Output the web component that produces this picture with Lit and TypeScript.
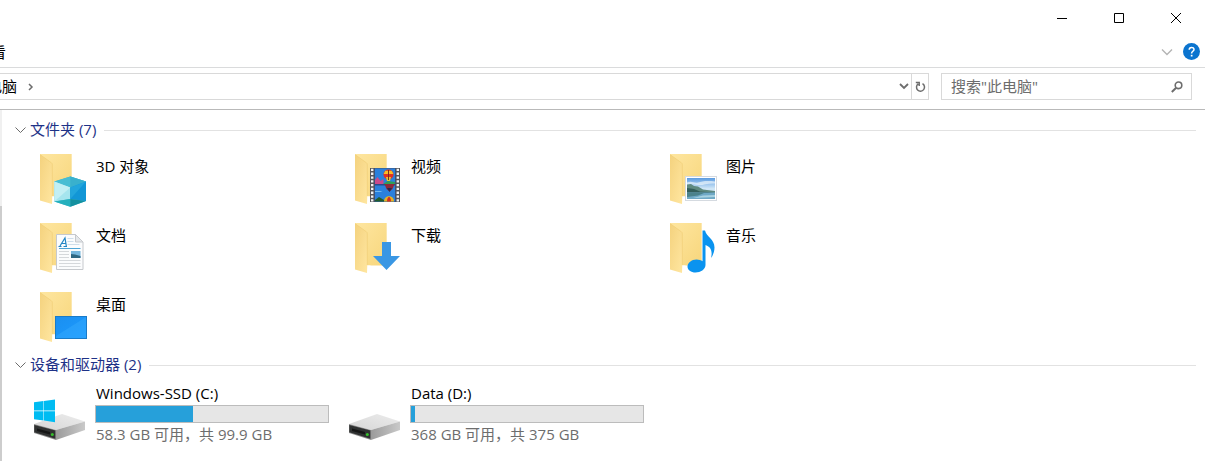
import { LitElement, html, css, svg, nothing, SVGTemplateResult } from "lit";
import { customElement, property, state } from "lit/decorators.js";

const overlays: Record<string, SVGTemplateResult> = {
  objects: svg`
    <polygon points="42.3,27.5 58,32.5 58,52 42.3,57.8 26.3,52.5 26.3,32.5" fill="#3fb6cf"/>
    <polygon points="42.3,27.5 58,32.5 42.3,38.5 26.3,32.5" fill="#48bdd3"/>
    <polygon points="42.3,27.5 58,32.5 42.3,38.5" fill="#39b0cd"/>
    <polygon points="26.3,32.5 42.3,38.5 42.3,50 26.3,52.5" fill="#a5e5ee"/>
    <polygon points="26.3,32.5 42.3,38.5 26.3,52.5" fill="#c2eff4"/>
    <polygon points="26.3,52.5 42.3,50 42.3,57.8" fill="#25b0bd"/>
    <polygon points="42.3,38.5 58,32.5 58,52 42.3,50" fill="#1296d6"/>
    <polygon points="42.3,38.5 58,32.5 42.3,50" fill="#22a5dc"/>
    <polygon points="42.3,50 58,52 42.3,57.8" fill="#14909f"/>`,
  video: svg`<g transform="translate(-3 0)">
    <rect x="30" y="19" width="30" height="34" fill="#55565a"/>
    <rect x="34.500" y="19.500" width="21" height="33" fill="#2a4a8a"/>
    <rect x="35" y="19.500" width="20" height="15.500" fill="#2a80dc"/>
    <rect x="35" y="36.500" width="20" height="16" fill="#2a80dc"/>
    <path d="M32.200 19.800V53M57.800 19.800V53" stroke="#f2f2f3" stroke-width="2.400" stroke-dasharray="2.300 1.500"/>
    <path d="M35 31l2.500-3 3 4 3-2v5H35z" fill="#c84b8b"/>
    <path d="M43 35l5-3 7 1v2z" fill="#2f9c58"/>
    <circle cx="48.500" cy="25.500" r="5" fill="#e33022"/>
    <path d="M45.300 21.800h6.400l1.700 3.200h-9.800z" fill="#f8bd26"/>
    <path d="M46 28h5l-1 4h-3z" fill="#e7c333"/>
    <path d="M48.500 21v10" stroke="#7a2d25"/>
    <path d="M44.500 35h10l-2 5-3 2.500-3-2.500z" fill="#8f293a"/>
    <path d="M47 39h5l-2.500 4z" fill="#272a50"/>
    <path d="M35 42h5.500l2 1H35z" fill="#72b9ef"/>
    <path d="M35 51l4-3 5 3v1.500h-9z" fill="#235b2d"/>
    <path d="M44 52.500c0-7 10-7 10 0z" fill="#e6b224"/>
    <path d="M47 52.500c0-6 4-6 4 0z" fill="#d22e24"/></g>`,
  pictures: svg`<g transform="translate(-3 0)">
    <rect x="30.500" y="27.500" width="31" height="24" fill="#fff" stroke="#d5dae0"/>
    <rect x="32" y="29" width="28" height="21" fill="url(#sky)"/>
    <path d="M32 33.500c5-2 7 1 11 0s8-2 17-1v2c-8-.5-12 2-17 1.500s-7-1-11 0z" fill="#eaf4fb" opacity=".7"/>
    <path d="M32 35.500l4-.5 3 2 4 .5 5 3 12 1.500v1.500H32z" fill="#5f8a80"/>
    <path d="M32 39l7 1 6 2.500 15 1V44H32z" fill="#335e5a"/>
    <rect x="32" y="43.500" width="28" height="6.500" fill="#6fa9c6"/>
    <path d="M32 44h17l-6 2.500-11 1.500z" fill="#4b828b"/>
    <path d="M38 49l10-2.500 12-.5v2z" fill="#a8d2e2"/></g>`,
  documents: svg`
    <path d="M28.500 16.500h19l7.500 7.500v27.500h-26.500z" fill="#fbfcfd" stroke="#c6c9cd"/>
    <path d="M47.500 16.500v7.500h7.500z" fill="#e5e8eb" stroke="#c6c9cd"/>
    <path d="M39.500 20.500h6M39.500 23.500h6M39.500 26.500h12" stroke="#cfdeea"/>
    <path d="M31 30.500h21.500" stroke="#4fa5d5"/>
    <path d="M31 33.500h10M31 36.500h10M31 39.500h10M31 42.500h21.500M31 45.500h21.500M31 48.500h21.500" stroke="#d5d8db"/>
    <rect x="43" y="33" width="9.500" height="7" fill="#75b6dd"/>
    <path d="M43 36l4 .5 5.500 1.500v2H43z" fill="#2e6783"/>
    <path d="M30.500 28.500h3M35.500 28.500h3.500M32 28l5-8 1.300 8M33.500 25.500h4" fill="none" stroke="#2486c4" stroke-width="1.200"/>`,
  downloads: svg`<path d="M39 24h9v14h9L43.500 52 30 38h9z" fill="#3a97e4"/>`,
  music: svg`
    <path transform="translate(-3 0)" d="M47.500 12.500h2.500c1.500 6.500 9.500 8.500 9.500 17 0 4-1.500 8-3.500 10.500 1.500-6 .5-11-5.500-13V47c0 4.500-5 7.500-10 7.500-4.500 0-8-2.500-8-6s4-7 9-7c2.500 0 4.500.7 6 1.800z" fill="#0a93ef"/>`,
  desktop: svg`
    <rect x="27.500" y="29.500" width="31" height="22" fill="url(#desk)" stroke="#1a7bc8"/>
    <path d="M28 49l19-12 11-7v21H28z" fill="#3fb1ff" opacity=".35"/>`,
};

@customElement("folder-icon")
class FolderIcon extends LitElement {
  @property() kind = "";
  static styles = css`
    :host { display: block; flex: none; }
    svg { display: block; }
  `;
  render() {
    return html`<svg width="60" height="60" viewBox="0 0 60 60" overflow="visible" aria-hidden="true">
      <defs>
        <linearGradient id="back" x1="0" y1="0" x2="1" y2="1"><stop offset="0" stop-color="#fee6a0"/><stop offset="1" stop-color="#f7d67c"/></linearGradient>
        <linearGradient id="flap" x1="0" y1="0" x2="1" y2="1"><stop offset="0" stop-color="#f4d27e"/><stop offset="1" stop-color="#ffe6a0"/></linearGradient>
        <linearGradient id="sky" x1="0" y1="0" x2="0" y2="1"><stop offset="0" stop-color="#5b9be0"/><stop offset=".5" stop-color="#cfe6f7"/></linearGradient>
        <linearGradient id="desk" x1="0" y1="0" x2="1" y2="1"><stop offset="0" stop-color="#1a8ff0"/><stop offset="1" stop-color="#1d9bff"/></linearGradient>
      </defs>
      <path d="M12 5h31.700v42.500H20z" fill="url(#back)"/>
      <path d="M23.500 47.500h4v4l-4 3z" fill="#fff"/>
      <path d="M12 5.500l11.300 8.200c.7.500 1 1 1 2V47l-.3 8-12-3.500z" fill="url(#flap)"/>
      <path d="M12 5.500l11.300 8.200c.7.500 1 1 1 2V47" fill="none" stroke="#efcb72" stroke-width=".6"/>
      ${overlays[this.kind] ?? nothing}
    </svg>`;
  }
}

@customElement("drive-icon")
class DriveIcon extends LitElement {
  @property({ type: Boolean }) system = false;
  static styles = css`
    :host { display: block; flex: none; }
    svg { display: block; }
  `;
  render() {
    return html`<svg width="60" height="60" viewBox="0 0 60 60" aria-hidden="true">
      <defs>
        <linearGradient id="top" x1="0" y1="1" x2="1" y2="0"><stop offset="0" stop-color="#d6d6d6"/><stop offset="1" stop-color="#ececec"/></linearGradient>
        <linearGradient id="side" x1="0" y1="0" x2="1" y2="0"><stop offset="0" stop-color="#9b9b9b"/><stop offset="1" stop-color="#c9c9c9"/></linearGradient>
      </defs>
      <path d="M6 40L34 30l23 7.500-29 8.500z" fill="url(#top)"/>
      <path d="M28 46l29-8.500v8.500L28 56z" fill="url(#side)"/>
      <path d="M6 40l22 6v10L6 49z" fill="#8a8a8a"/>
      <path d="M6.300 41l21 5.500v8.300l-21-6.500z" fill="#2f3131"/>
      <path d="M9 44.500l13 3.500v2.500L9 47z" fill="#151616"/>
      <circle cx="24.300" cy="50.500" r="1.500" fill="#35c02c"/>
      ${this.system
        ? svg`<path d="M6 18.300l9.500-1.300v9.500H6zM16 17L27 15.500v11H16zM6 27.200h9.500V36.500L6 35.200zM16 27.200h11v11L16 36.600z" fill="#00bcf2"/>`
        : nothing}
    </svg>`;
  }
}

@customElement("item-group")
class ItemGroup extends LitElement {
  @property() heading = "";
  @property({ type: Number }) count = 0;
  @state() private open = true;
  static styles = css`
    :host { display: block; }
    .head { display: flex; align-items: center; gap: 8px; height: 18px; }
    .toggle { display: flex; align-items: center; gap: 4px; padding: 0; border: 0; background: none; font: inherit; line-height: 18px; color: #1e3287; white-space: nowrap; }
    .title { padding-bottom: 2px; }
    .rule { flex: 1; height: 1px; background: #e2e2e2; }
    .tiles { display: grid; grid-template-columns: repeat(auto-fill, 315px); margin: 10px 0 0 13px; }
  `;
  render() {
    return html`
      <div class="head">
        <button class="toggle" aria-expanded=${this.open} @click=${() => (this.open = !this.open)}>
          <svg width="11" height="8" viewBox="0 0 11 8" fill="none" stroke="#6b6b6b"><path d="M.5 1.500l5 5 5-5"/></svg>
          <span class="title">${this.heading} (${this.count})</span>
        </button>
        <div class="rule"></div>
      </div>
      ${this.open ? html`<div class="tiles"><slot></slot></div>` : nothing}
    `;
  }
}

interface Drive { name: string; free: number; total: number; system: boolean }

@customElement("app-root")
class AppRoot extends LitElement {
  private folders = [
    ["objects", "3D 对象"], ["video", "视频"], ["pictures", "图片"],
    ["documents", "文档"], ["downloads", "下载"], ["music", "音乐"],
    ["desktop", "桌面"],
  ];
  private drives: Drive[] = [
    { name: "Windows-SSD (C:)", free: 58.3, total: 99.9, system: true },
    { name: "Data (D:)", free: 368, total: 375, system: false },
  ];

  static styles = css`
    :host { display: flex; flex-direction: column; min-height: 100vh; box-sizing: border-box; overflow: hidden; background: #fff; color: #000; font: 15px/20px "Open Sans", "Noto Sans CJK SC", sans-serif; }
    button { padding: 0; border: 0; background: none; font: inherit; color: inherit; display: flex; align-items: center; justify-content: center; }
    svg { display: block; flex: none; }
    .titlebar { display: flex; justify-content: flex-end; height: 36px; padding-right: 1px; }
    .titlebar button { width: 57px; }
    .ribbon { display: flex; align-items: center; gap: 10px; height: 31px; padding-right: 5px; border-bottom: 1px solid #dadbdc; }
    .tab { margin: 0 auto 0 -24px; }
    .nav { display: flex; gap: 12px; padding: 5px 13px 9px 0; border-bottom: 1px solid #b9b9b9; }
    .address, .search { display: flex; box-sizing: border-box; height: 27px; border: 1px solid #d9d9d9; }
    .address { flex: 1; border-left: 0; }
    .crumb { gap: 11px; margin: 0 auto 0 -28px; }
    .crumb span { padding-bottom: 2px; }
    .drop { width: 15px; }
    .refresh { width: 17px; border-left: 1px solid #d9d9d9; }
    .search { flex: none; width: 251px; }
    .search input { flex: 1; min-width: 0; padding: 0 0 2px 9px; border: 0; outline: 0; background: none; font: inherit; color: #000; }
    .search input::placeholder { color: #6d6d6d; opacity: 1; }
    .search button { width: 28px; }
    .body { flex: 1; display: flex; }
    .scroll { flex: none; width: 2px; display: flex; flex-direction: column; background: #cdcdcd; }
    .track { height: 96px; background: #f0f0f0; }
    .content { flex: 1; min-width: 0; padding: 11px 9px 16px 13px; }
    .tile { display: flex; gap: 7px; height: 69px; }
    .label { padding-top: 7px; }
    .drive { display: flex; gap: 7px; }
    .info { width: 234px; }
    .name, .label, .free { padding-left: 1px; white-space: nowrap; }
    .name { line-height: 18px; }
    .bar { box-sizing: border-box; height: 18px; margin: 3px 0 1px; border: 1px solid #bcbcbc; background: #e6e6e6; }
    .used { height: 100%; background: #26a0da; }
    .free { color: #6d6d6d; }
  `;

  render() {
    return html`
      <header class="titlebar">
        <button aria-label="最小化"><svg width="10" height="10" stroke="#000"><path d="M0 5.500h10"/></svg></button>
        <button aria-label="最大化"><svg width="10" height="10" fill="none" stroke="#000"><path d="M.5 .5h9v9h-9z"/></svg></button>
        <button aria-label="关闭"><svg width="10" height="10" stroke="#000"><path d="M0 0l10 10M10 0L0 10"/></svg></button>
      </header>
      <div class="ribbon">
        <button class="tab">查看</button>
        <button aria-label="展开功能区"><svg width="12" height="8" fill="none" stroke="#b4b4b4" stroke-width="1.400"><path d="M1 1.500l5 5 5-5"/></svg></button>
        <button aria-label="帮助">
          <svg width="17" height="17" viewBox="0 0 17 17"><circle cx="8.500" cy="8.500" r="8.500" fill="#0b74cf"/><path d="M6.200 6.700c0-3 4.800-3 4.800-.3 0 1.800-2.400 1.900-2.400 4" fill="none" stroke="#fff" stroke-width="1.500"/><rect x="7.800" y="11.800" width="1.700" height="1.700" fill="#fff"/></svg>
        </button>
      </div>
      <nav class="nav">
        <div class="address">
          <button class="crumb"><span>此电脑</span><svg width="6" height="8" fill="none" stroke="#6d6d6d" stroke-width="1.500"><path d="M1 1l3 3-3 3"/></svg></button>
          <button class="drop" aria-label="历史记录"><svg width="10" height="7" fill="none" stroke="#6d6d6d" stroke-width="1.800"><path d="M1 1l4 4 4-4"/></svg></button>
          <button class="refresh" aria-label="刷新"><svg width="11" height="12" viewBox="0 0 11 12" fill="none" stroke="#6d6d6d" stroke-width="1.500"><path d="M7.500 2.700a4 4 0 1 1-4.300.2M.8 1.500h3.400v3.600"/></svg></button>
        </div>
        <div class="search">
          <input type="text" aria-label="搜索" placeholder='搜索"此电脑"'>
          <button aria-label="开始搜索"><svg width="12" height="12" fill="none" stroke="#6d6d6d"><circle cx="7.500" cy="4.300" r="3.300" stroke-width="1.600"/><path d="M5.200 6.700L.8 11" stroke-width="2"/></svg></button>
        </div>
      </nav>
      <div class="body">
        <div class="scroll"><div class="track"></div></div>
        <main class="content">
          <item-group heading="文件夹" .count=${this.folders.length}>
            ${this.folders.map(([kind, name]) => html`
              <div class="tile"><folder-icon kind=${kind}></folder-icon><div class="label">${name}</div></div>`)}
          </item-group>
          <item-group heading="设备和驱动器" .count=${this.drives.length}>
            ${this.drives.map((d) => {
              const used = ((d.total - d.free) / d.total) * 100;
              return html`
              <div class="drive">
                <drive-icon ?system=${d.system}></drive-icon>
                <div class="info">
                  <div class="name">${d.name}</div>
                  <div class="bar" role="meter" aria-label=${d.name} aria-valuemin="0" aria-valuemax="100" aria-valuenow=${Math.round(used)}><div class="used" style="width:${used}%"></div></div>
                  <div class="free">${d.free} GB 可用，共 ${d.total} GB</div>
                </div>
              </div>`;
            })}
          </item-group>
        </main>
      </div>
    `;
  }
}
